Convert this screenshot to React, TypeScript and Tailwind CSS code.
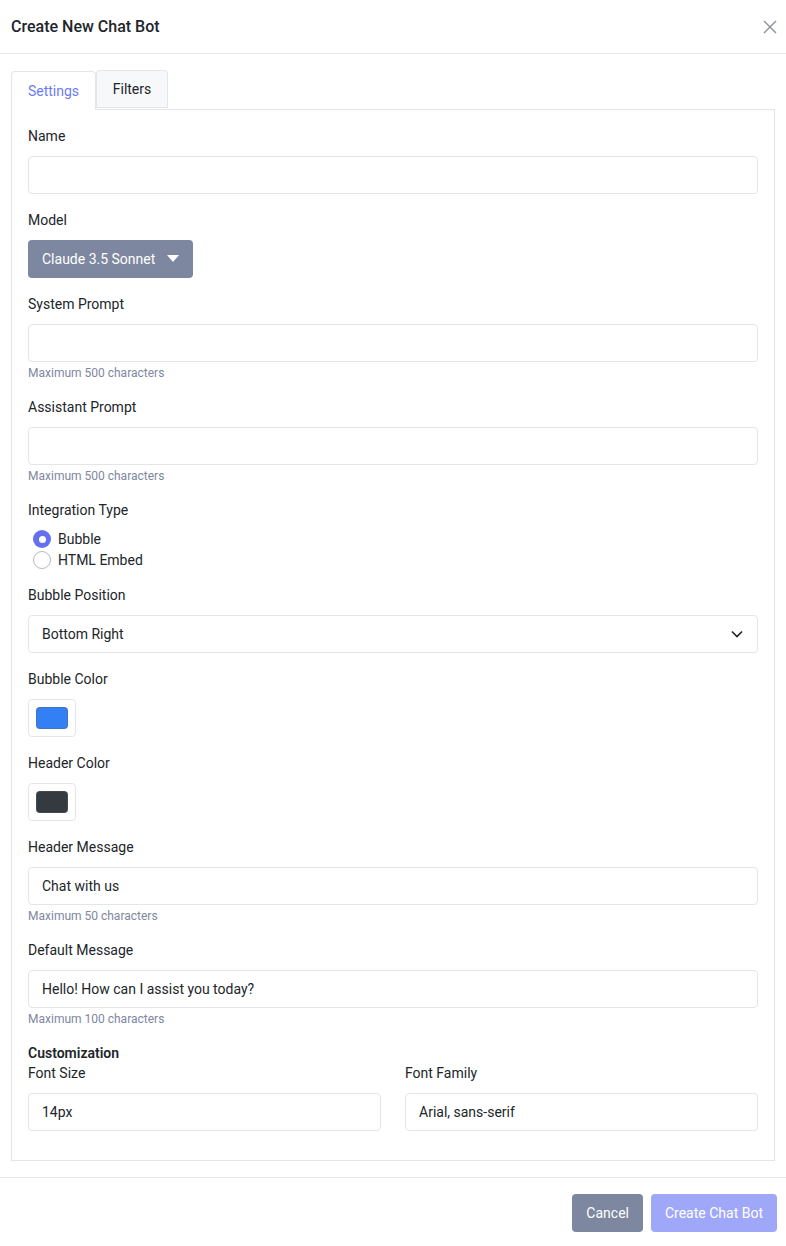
import React from "react";

function Field({ label, children, helper }: { label: string; children: React.ReactNode; helper?: string }) {
  return (
    <div className="mb-4">
      <div className="text-sm leading-5 text-[#212529] mb-[10px]">{label}</div>
      {children}
      {helper && <div className="text-xs leading-4 mt-[3px] text-[#7d879f]">{helper}</div>}
    </div>
  );
}

function Input({ value = "" }: { value?: string }) {
  return (
    <div className="h-[38px] w-full border border-[#e3e5e8] rounded-[4px] px-[13px] flex items-center text-sm text-[#212529] bg-white">
      {value}
    </div>
  );
}

export default function App() {
  return (
    <div className="w-[786px] h-[1246px] bg-white text-[#212529]" style={{ fontFamily: "Roboto, 'Liberation Sans', sans-serif" }}>
      <div className="h-[54px] border-b border-[#e5e7eb] flex items-center justify-between pl-[11px] pr-[8px]">
        <div className="text-base font-medium">Create New Chat Bot</div>
        <svg width="14" height="14" viewBox="0 0 14 14" className="mr-[1px]"><path d="M1 1L13 13M13 1L1 13" stroke="#8a8f98" strokeWidth="1.4" /></svg>
      </div>
      <div className="px-[11px] pt-[16px]">
        <div className="flex">
          <div className="h-[39px] w-[85px] border border-[#e3e5e8] border-b-0 rounded-t-[4px] bg-white flex items-center justify-center text-sm text-[#6c7cf5] relative top-[1px]">Settings</div>
          <div className="h-[38px] w-[72px] border border-[#e3e5e8] rounded-t-[4px] bg-[#f7f8fa] flex items-center justify-center text-sm">Filters</div>
        </div>
        <div className="border border-[#e3e5e8] px-4 pt-4 pb-4 h-[1052px]">
          <Field label="Name"><Input /></Field>
          <Field label="Model">
            <div className="inline-flex h-[38px] items-center gap-3 px-[14px] rounded-[4px] bg-[#7d87a0] text-white text-sm">
              Claude 3.5 Sonnet
              <svg width="12" height="8" viewBox="0 0 12 8"><path d="M0 0H12L6 7Z" fill="white" /></svg>
            </div>
          </Field>
          <Field label="System Prompt" helper="Maximum 500 characters"><Input /></Field>
          <Field label="Assistant Prompt" helper="Maximum 500 characters"><Input /></Field>
          <Field label="Integration Type">
            <div className="flex flex-col gap-[3px] pl-[5px]">
              <div className="flex items-center gap-[7px] h-[18px] text-sm">
                <div className="w-[18px] h-[18px] rounded-full bg-[#6470f0] flex items-center justify-center"><div className="w-[7px] h-[7px] rounded-full bg-white" /></div>
                Bubble
              </div>
              <div className="flex items-center gap-[7px] h-[18px] text-sm">
                <div className="w-[18px] h-[18px] rounded-full border border-[#b5b8bd] bg-white" />
                HTML Embed
              </div>
            </div>
          </Field>
          <Field label="Bubble Position">
            <div className="h-[38px] w-full border border-[#e3e5e8] rounded-[4px] pl-[13px] pr-[14px] flex items-center justify-between text-sm">
              Bottom Right
              <svg width="12" height="8" viewBox="0 0 12 8"><path d="M1 1.5L6 6.5L11 1.5" stroke="#212529" strokeWidth="1.6" fill="none" /></svg>
            </div>
          </Field>
          <Field label="Bubble Color">
            <div className="w-[48px] h-[38px] border border-[#e3e5e8] rounded-[4px] flex items-center justify-center">
              <div className="w-[32px] h-[22px] rounded-[4px] bg-[#3380f5] border border-[#5a6270]/40" />
            </div>
          </Field>
          <Field label="Header Color">
            <div className="w-[48px] h-[38px] border border-[#e3e5e8] rounded-[4px] flex items-center justify-center">
              <div className="w-[32px] h-[22px] rounded-[4px] bg-[#343a40] border border-[#5a6270]/40" />
            </div>
          </Field>
          <Field label="Header Message" helper="Maximum 50 characters"><Input value="Chat with us" /></Field>
          <Field label="Default Message" helper="Maximum 100 characters"><Input value="Hello! How can I assist you today?" /></Field>
          <div className="text-sm font-semibold leading-5">Customization</div>
          <div className="grid grid-cols-2 gap-6">
            <Field label="Font Size"><Input value="14px" /></Field>
            <Field label="Font Family"><Input value="Arial, sans-serif" /></Field>
          </div>
        </div>
      </div>
      <div className="mt-[16px] border-t border-[#e5e7eb] flex justify-end gap-2 pr-[9px] pt-[16px]">
        <div className="h-[38px] px-[14px] rounded-[4px] bg-[#7d87a0] text-white text-sm flex items-center">Cancel</div>
        <div className="h-[38px] px-[14px] rounded-[4px] bg-[#9fa8f8] text-white text-sm flex items-center">Create Chat Bot</div>
      </div>
    </div>
  );
}
